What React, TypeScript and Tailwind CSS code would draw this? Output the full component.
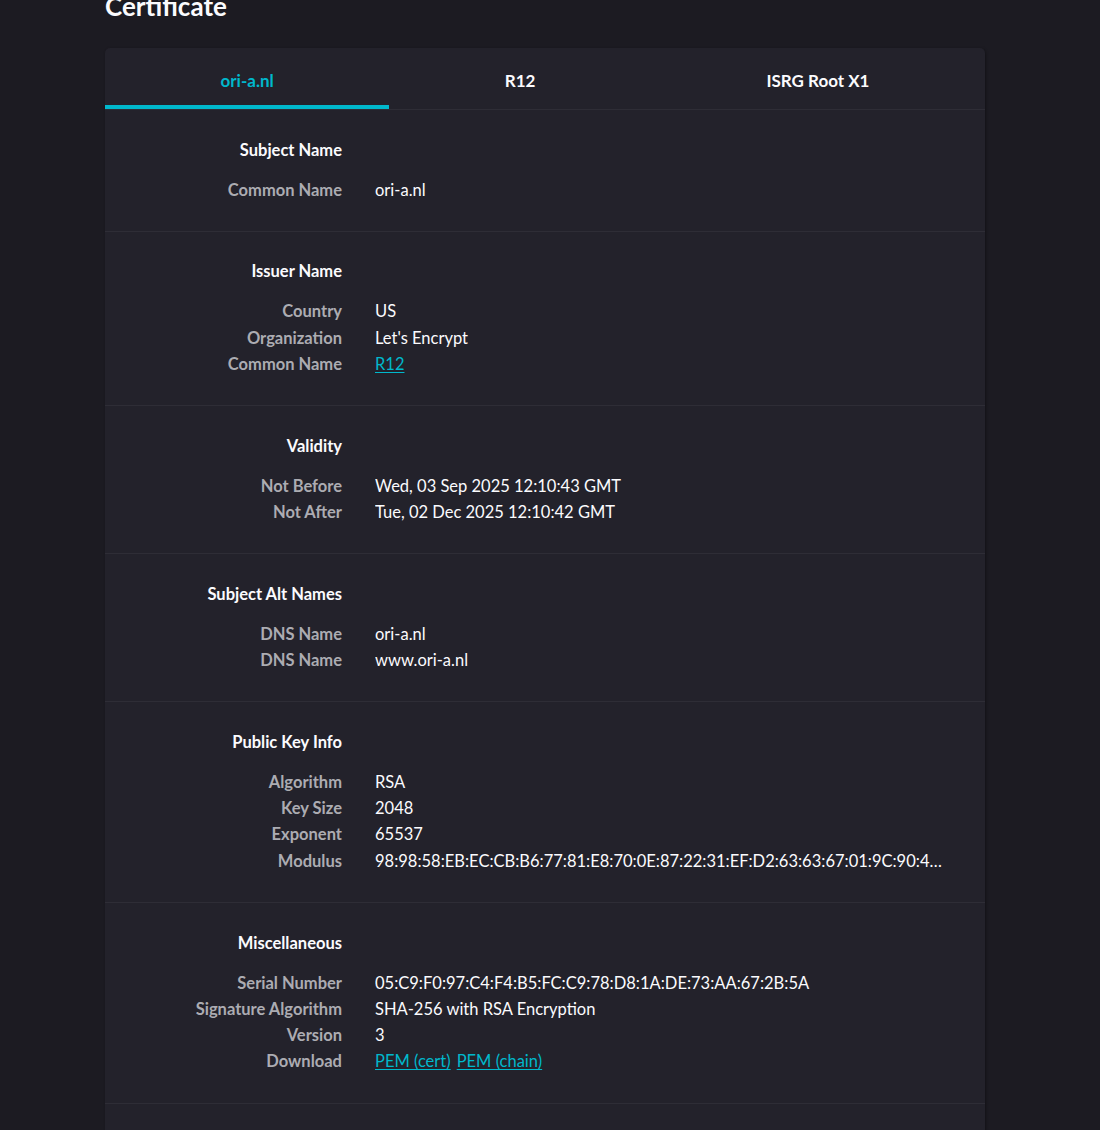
import React from 'react';

type Row = { label: string; value: React.ReactNode };
type Section = { title: string; rows: Row[] };

const link = 'text-[#00b8cc] underline underline-offset-2 decoration-1';

const sections: Section[] = [
  { title: 'Subject Name', rows: [{ label: 'Common Name', value: 'ori-a.nl' }] },
  {
    title: 'Issuer Name',
    rows: [
      { label: 'Country', value: 'US' },
      { label: 'Organization', value: "Let's Encrypt" },
      { label: 'Common Name', value: <a className={link}>R12</a> },
    ],
  },
  {
    title: 'Validity',
    rows: [
      { label: 'Not Before', value: 'Wed, 03 Sep 2025 12:10:43 GMT' },
      { label: 'Not After', value: 'Tue, 02 Dec 2025 12:10:42 GMT' },
    ],
  },
  {
    title: 'Subject Alt Names',
    rows: [
      { label: 'DNS Name', value: 'ori-a.nl' },
      { label: 'DNS Name', value: 'www.ori-a.nl' },
    ],
  },
  {
    title: 'Public Key Info',
    rows: [
      { label: 'Algorithm', value: 'RSA' },
      { label: 'Key Size', value: '2048' },
      { label: 'Exponent', value: '65537' },
      {
        label: 'Modulus',
        value:
          '98:98:58:EB:EC:CB:B6:77:81:E8:70:0E:87:22:31:EF:D2:63:63:67:01:9C:90:4E:1A:6D:22:8C:7F:3B:91:AA:05:C3',
      },
    ],
  },
  {
    title: 'Miscellaneous',
    rows: [
      { label: 'Serial Number', value: '05:C9:F0:97:C4:F4:B5:FC:C9:78:D8:1A:DE:73:AA:67:2B:5A' },
      { label: 'Signature Algorithm', value: 'SHA-256 with RSA Encryption' },
      { label: 'Version', value: '3' },
      {
        label: 'Download',
        value: (
          <span className="flex gap-[6px]">
            <a className={link}>PEM (cert)</a>
            <a className={link}>PEM (chain)</a>
          </span>
        ),
      },
    ],
  },
];

const tabs = ['ori-a.nl', 'R12', 'ISRG Root X1'];

function CertSection({ section }: { section: Section }) {
  return (
    <div className="grid grid-cols-[237px_1fr] gap-x-[33px] pt-[26.5px] pb-[28px] pr-[37px] border-b border-[#2e2d36]">
      <div className="text-right font-bold text-[#fbfbfe] leading-[26px] mb-[14px]">{section.title}</div>
      <div />
      {section.rows.map((r, i) => (
        <React.Fragment key={i}>
          <div className="text-right font-bold text-[#acacb2] leading-[26.3px]">{r.label}</div>
          <div className="text-[#fbfbfe] leading-[26.3px] truncate min-w-0">{r.value}</div>
        </React.Fragment>
      ))}
    </div>
  );
}

export default function App() {
  return (
    <div className="min-h-screen overflow-hidden bg-[#1c1b22] font-['Lato',sans-serif] text-[16.5px]">
      <div className="w-[880px] ml-[105px]">
        <h1 className="text-[26px] font-bold text-[#fbfbfe] leading-[28px] -mt-[8px]">Certificate</h1>
        <div className="mt-[28px] rounded-t-[5px] bg-[#23222b] shadow-[1px_1px_3px_rgba(0,0,0,0.35)]">
          <div className="flex border-b border-[#2e2d36] h-[62px]">
            {tabs.map((t, i) => (
              <div
                key={t}
                className={
                  i === 0
                    ? 'flex-auto flex items-center justify-center pt-[8px] border-b-4 border-[#00b8cc] text-[#00b8cc] font-bold text-[17px]'
                    : 'flex-auto flex items-center justify-center pt-[8px] border-b-4 border-transparent text-[#fbfbfe] font-bold text-[17px]'
                }
              >
                {t}
              </div>
            ))}
          </div>
          {sections.map((s) => (
            <CertSection key={s.title} section={s} />
          ))}
          <div className="h-[80px]" />
        </div>
      </div>
    </div>
  );
}
